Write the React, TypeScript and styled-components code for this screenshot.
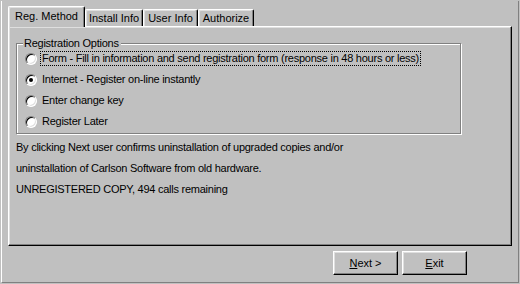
import React, { useState } from 'react';
import styled, { createGlobalStyle } from 'styled-components';

const GlobalStyle = createGlobalStyle`
  html, body {
    margin: 0;
    padding: 0;
    background: #c0c0c0;
  }
  body {
    font-family: "Liberation Sans", Arial, sans-serif;
    font-size: 11px;
    color: #000;
  }
`;

// Styled Components
const Window = styled.div`
  width: 520px;
  height: 284px;
  box-sizing: border-box;
  padding: 1px;
  background: #c0c0c0;
`;

const Frame = styled.div`
  height: 100%;
  box-sizing: border-box;
  border-left: 1px solid #fff;
  border-right: 1px solid #808080;
  border-bottom: 1px solid #808080;
  padding: 5px 6px 0 6px;
  display: flex;
  flex-direction: column;
`;

const TabStrip = styled.div`
  display: flex;
  align-items: flex-end;
  height: 21px;
  margin-bottom: -1px;
  position: relative;
  z-index: 1;
`;

const Tab = styled.div<{ $active?: boolean; $w: number }>`
  box-sizing: border-box;
  width: ${({ $w }) => $w}px;
  height: ${({ $active }) => ($active ? 21 : 17)}px;
  margin-bottom: ${({ $active }) => ($active ? 0 : 1)}px;
  background: #c0c0c0;
  border-top: 1px solid #fff;
  border-left: 1px solid #fff;
  border-right: 1px solid #000;
  border-radius: 2px 2px 0 0;
  box-shadow: inset -1px 0 0 #808080, inset 1px 1px 0 #dfdfdf;
  display: flex;
  align-items: ${({ $active }) => ($active ? 'flex-start' : 'center')};
  justify-content: center;
  padding-top: ${({ $active }) => ($active ? 3 : 0)}px;
  white-space: nowrap;
  line-height: 13px;
`;

const Panel = styled.div`
  box-sizing: border-box;
  height: 220px;
  border-top: 1px solid #fff;
  border-left: 1px solid #fff;
  border-right: 1px solid #000;
  border-bottom: 1px solid #000;
  box-shadow: inset -1px -1px 0 #808080, inset 1px 1px 0 #dfdfdf;
  padding: 10px 0 0 7px;
  letter-spacing: -0.25px;
`;

const Group = styled.fieldset`
  box-sizing: border-box;
  width: 445px;
  margin: 0;
  padding: 0 0 1px 0;
  border: 1px solid #808080;
  box-shadow: inset 1px 1px 0 #fff, 1px 1px 0 #fff;
`;

const Legend = styled.legend`
  margin-left: 6px;
  padding: 0 2px 0 1px;
  line-height: 13px;
  background: #c0c0c0;
`;

const OptionList = styled.div`
  display: flex;
  flex-direction: column;
  margin-top: -2px;
`;

const Option = styled.label`
  display: flex;
  align-items: center;
  height: 21px;
  padding-left: 8px;
  gap: 5px;
  cursor: default;
`;

const Radio = styled.span<{ $checked?: boolean }>`
  position: relative;
  box-sizing: border-box;
  width: 12px;
  height: 12px;
  border-radius: 50%;
  background: #fff;
  border: 1px solid;
  border-color: #808080 #fff #fff #808080;
  box-shadow: inset 1px 1px 0 #000, inset -1px -1px 0 #dfdfdf;
  flex: none;

  &::after {
    content: '';
    display: ${({ $checked }) => ($checked ? 'block' : 'none')};
    position: absolute;
    left: 3px;
    top: 3px;
    width: 4px;
    height: 4px;
    border-radius: 50%;
    background: #000;
  }
`;

const OptionText = styled.span<{ $focused?: boolean }>`
  line-height: 13px;
  padding: 0 1px;
  margin-left: -1px;
  outline: ${({ $focused }) => ($focused ? '1px dotted #000' : 'none')};
  white-space: nowrap;
`;

const Notes = styled.div`
  margin-top: 3px;
  display: flex;
  flex-direction: column;
`;

const NoteLine = styled.div`
  line-height: 21px;
  white-space: nowrap;
`;

const ButtonRow = styled.div`
  display: flex;
  justify-content: flex-end;
  gap: 4px;
  margin-top: 5px;
  padding-right: 45px;
`;

const Button = styled.button`
  box-sizing: border-box;
  width: 65px;
  height: 24px;
  padding: 0;
  background: #c0c0c0;
  font-family: "Liberation Sans", Arial, sans-serif;
  font-size: 11px;
  color: #000;
  border-top: 1px solid #fff;
  border-left: 1px solid #fff;
  border-right: 1px solid #000;
  border-bottom: 1px solid #000;
  box-shadow: inset -1px -1px 0 #808080, inset 1px 1px 0 #dfdfdf;
  border-radius: 0;

  u {
    text-decoration: underline;
  }
`;

const tabs = [
  { label: 'Reg. Method', width: 77 },
  { label: 'Install Info', width: 58 },
  { label: 'User Info', width: 55 },
  { label: 'Authorize', width: 56 },
];

const options = [
  'Form - Fill in information and send registration form (response in 48 hours or less)',
  'Internet - Register on-line instantly',
  'Enter change key',
  'Register Later',
];

export default function App() {
  const [tab, setTab] = useState(0);
  const [choice, setChoice] = useState(1);

  return (
    <Window>
      <GlobalStyle />
      <Frame>
        <TabStrip>
          {tabs.map((t, i) => (
            <Tab key={t.label} $w={t.width} $active={i === tab} onClick={() => setTab(i)}>
              {t.label}
            </Tab>
          ))}
        </TabStrip>
        <Panel>
          <Group>
            <Legend>Registration Options</Legend>
            <OptionList>
              {options.map((o, i) => (
                <Option key={o} onClick={() => setChoice(i)}>
                  <Radio $checked={i === choice} />
                  <OptionText $focused={i === 0}>{o}</OptionText>
                </Option>
              ))}
            </OptionList>
          </Group>
          <Notes>
            <NoteLine>By clicking Next user confirms uninstallation of upgraded copies and/or</NoteLine>
            <NoteLine>uninstallation of Carlson Software from old hardware.</NoteLine>
            <NoteLine>UNREGISTERED COPY, 494 calls remaining</NoteLine>
          </Notes>
        </Panel>
        <ButtonRow>
          <Button>
            <u>N</u>ext &gt;
          </Button>
          <Button>
            <u>E</u>xit
          </Button>
        </ButtonRow>
      </Frame>
    </Window>
  );
}
